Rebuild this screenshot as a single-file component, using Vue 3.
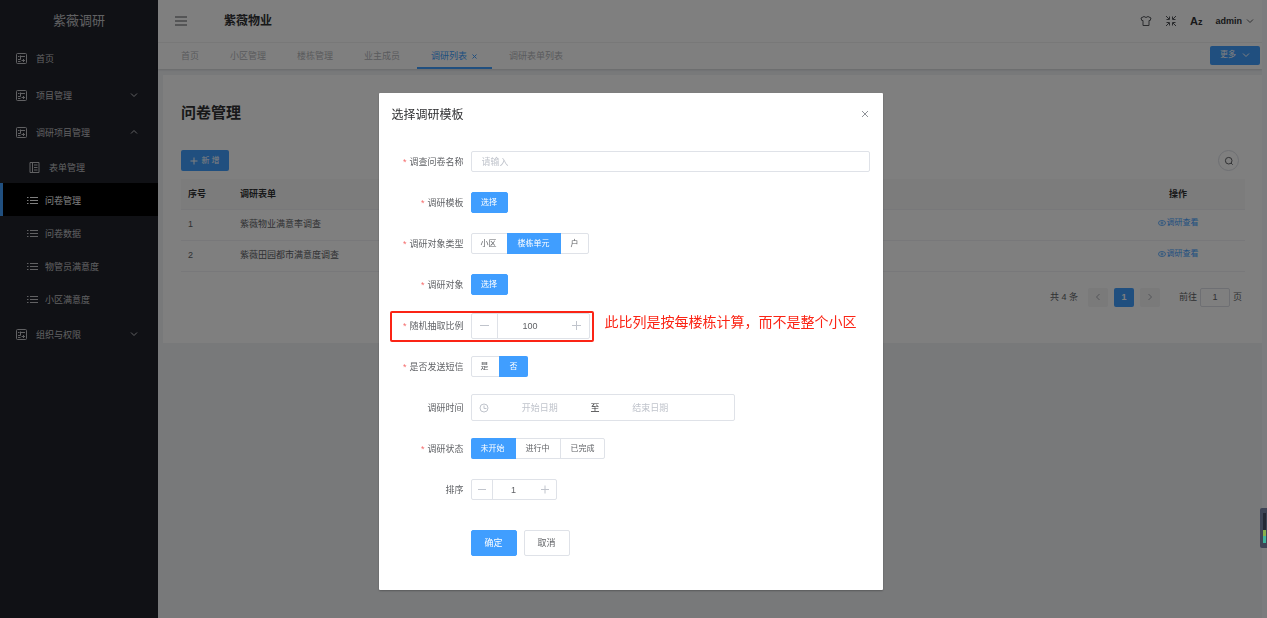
<script setup>
import { ref } from 'vue'

const menu = [
  { label: '首页', level: 1, icon: 'panel' },
  { label: '项目管理', level: 1, icon: 'panel', arrow: 'down' },
  { label: '调研项目管理', level: 1, icon: 'panel', arrow: 'up' },
  { label: '表单管理', level: 2, icon: 'book' },
  { label: '问卷管理', level: 2, icon: 'list', active: true },
  { label: '问卷数据', level: 2, icon: 'list' },
  { label: '物管员满意度', level: 2, icon: 'list' },
  { label: '小区满意度', level: 2, icon: 'list' },
  { label: '组织与权限', level: 1, icon: 'panel', arrow: 'down' }
]
const tabs = [
  { label: '首页' },
  { label: '小区管理' },
  { label: '楼栋管理' },
  { label: '业主成员' },
  { label: '调研列表', active: true },
  { label: '调研表单列表' }
]
const rows = [
  { id: 1, name: '紫薇物业满意率调查' },
  { id: 2, name: '紫薇田园都市满意度调查' }
]
const targets = ['小区', '楼栋单元', '户']
const yesNo = ['是', '否']
const states = ['未开始', '进行中', '已完成']

const name = ref('')
const target = ref('楼栋单元')
const ratio = ref(100)
const sms = ref('否')
const state = ref('未开始')
const order = ref(1)
const page = ref(1)
</script>

<template>
  <div class="app">
    <aside class="sidebar">
      <div class="logo">紫薇调研</div>
      <nav class="menu">
        <a
          v-for="item in menu"
          :key="item.label"
          href="#"
          class="menu-item"
          :class="['level-' + item.level, 'with-' + item.icon, { active: item.active }]"
        >
          <svg v-if="item.icon === 'panel'" class="menu-icon" viewBox="0 0 11 11">
            <rect x=".5" y=".5" width="10" height="10" rx="1" />
            <path d="M2 3.500h1.500M5 3.500h4M4.500 2.500v2.500M2 6.500h2.500V5M5.500 7.500h3.500M7.500 6v3M2 8.500h2.500" />
          </svg>
          <svg v-else-if="item.icon === 'book'" class="menu-icon" viewBox="0 0 11 11">
            <path d="M1 .5h9v10H1zM3.500 .5v10M5 3h3.500M5 5.500h3.500M5 8h3.500" />
          </svg>
          <svg v-else class="menu-icon" viewBox="0 0 11 11">
            <path d="M0 2.500h1.500M3 2.500h8M0 5.500h1.500M3 5.500h8M0 8.500h1.500M3 8.500h8" />
          </svg>
          <span class="menu-label">{{ item.label }}</span>
          <svg v-if="item.arrow" class="menu-arrow" :class="item.arrow" viewBox="0 0 8 8">
            <path d="M1 2.500l3 3 3-3" />
          </svg>
        </a>
      </nav>
    </aside>

    <div class="main">
      <header class="header">
        <button class="icon-btn burger" type="button" aria-label="菜单">
          <svg viewBox="0 0 14 12"><path d="M1 2h12M1 6h12M1 10h12" /></svg>
        </button>
        <strong class="site">紫薇物业</strong>
        <div class="tools">
          <button class="icon-btn" type="button" aria-label="主题">
            <svg viewBox="0 0 12 12">
              <path d="M4 1.500Q6 3.500 8 1.500L11 3 10.200 5.500H9V10.500H3V5.500H1.800L1 3Z" />
            </svg>
          </button>
          <button class="icon-btn" type="button" aria-label="全屏">
            <svg viewBox="0 0 12 12">
              <path d="M1 1l3 3M1.500 4.500h3v-3M11 1l-3 3M10.500 4.500h-3v-3M1 11l3-3M1.500 7.500h3v3M11 11l-3-3M10.500 7.500h-3v3" />
            </svg>
          </button>
          <button class="font-btn" type="button">A<small>z</small></button>
          <button class="user" type="button">
            admin
            <svg viewBox="0 0 8 8"><path d="M1 2.500l3 3 3-3" /></svg>
          </button>
        </div>
      </header>

      <div class="tabbar">
        <nav class="tabs">
          <a v-for="t in tabs" :key="t.label" href="#" class="tab" :class="{ active: t.active }">
            {{ t.label }}
            <svg v-if="t.active" viewBox="0 0 7 7"><path d="M1.500 1.500l4 4M5.500 1.500l-4 4" /></svg>
          </a>
        </nav>
        <button class="more" type="button">
          更多
          <svg viewBox="0 0 8 8"><path d="M1 2.500l3 3 3-3" /></svg>
        </button>
      </div>

      <main class="card">
        <h1>问卷管理</h1>
        <div class="toolbar">
          <button class="add" type="button">
            <svg viewBox="0 0 8 8"><path d="M4 .5v7M.5 4h7" /></svg>
            新 增
          </button>
          <button class="search" type="button" aria-label="搜索">
            <svg viewBox="0 0 10 10"><circle cx="4.700" cy="4.700" r="3.300" /><path d="M7 7l1.700 1.700" /></svg>
          </button>
        </div>
        <table class="table">
          <thead>
            <tr>
              <th class="col-no">序号</th>
              <th>调研表单</th>
              <th class="col-op">操作</th>
            </tr>
          </thead>
          <tbody>
            <tr v-for="r in rows" :key="r.id">
              <td>{{ r.id }}</td>
              <td>{{ r.name }}</td>
              <td class="col-op">
                <a href="#" class="view">
                  <svg viewBox="0 0 8 8">
                    <ellipse cx="4" cy="4" rx="3.500" ry="2.500" />
                    <circle cx="4" cy="4" r="1" />
                  </svg>
                  调研查看
                </a>
              </td>
            </tr>
          </tbody>
        </table>
        <div class="pager">
          <span class="total">共 4 条</span>
          <button type="button" class="page-btn" aria-label="上一页">
            <svg viewBox="0 0 8 8"><path d="M5.500 1l-3 3 3 3" /></svg>
          </button>
          <button type="button" class="page-btn current">1</button>
          <button type="button" class="page-btn" aria-label="下一页">
            <svg viewBox="0 0 8 8"><path d="M2.500 1l3 3-3 3" /></svg>
          </button>
          <label class="jump">前往 <input v-model="page" type="text" /> 页</label>
        </div>
      </main>
    </div>
    <div class="scroll-track"></div>

    <div class="overlay">
      <section class="dialog" role="dialog" aria-labelledby="dialog-title">
        <div class="dialog-head">
          <h2 id="dialog-title">选择调研模板</h2>
          <button class="close" type="button" aria-label="关闭">
            <svg viewBox="0 0 8 8"><path d="M1 1l6 6M7 1l-6 6" /></svg>
          </button>
        </div>
        <form class="form" @submit.prevent>
          <div class="row">
            <label class="label required" for="f-name">调查问卷名称</label>
            <input id="f-name" v-model="name" class="text" type="text" placeholder="请输入" />
          </div>
          <div class="row">
            <label class="label required" for="f-template">调研模板</label>
            <button id="f-template" class="btn small primary" type="button">选择</button>
          </div>
          <div class="row" role="radiogroup" aria-labelledby="l-target">
            <span id="l-target" class="label required">调研对象类型</span>
            <div class="segments">
              <label v-for="o in targets" :key="o" class="segment" :class="{ on: target === o }">
                <input v-model="target" type="radio" name="target" :value="o" />{{ o }}
              </label>
            </div>
          </div>
          <div class="row">
            <label class="label required" for="f-object">调研对象</label>
            <button id="f-object" class="btn small primary" type="button">选择</button>
          </div>
          <div class="row">
            <label class="label required" for="f-ratio">随机抽取比例</label>
            <div class="number large">
              <button type="button" aria-label="减少" @click="ratio--">
                <svg viewBox="0 0 10 10"><path d="M1 4.500h9" /></svg>
              </button>
              <input id="f-ratio" v-model="ratio" type="text" />
              <button type="button" aria-label="增加" @click="ratio++">
                <svg viewBox="0 0 10 10"><path d="M1 4.500h9M5.500 0v9" /></svg>
              </button>
            </div>
            <div class="mark"></div>
            <p class="note">此比列是按每楼栋计算，而不是整个小区</p>
          </div>
          <div class="row" role="radiogroup" aria-labelledby="l-sms">
            <span id="l-sms" class="label required">是否发送短信</span>
            <div class="segments">
              <label v-for="o in yesNo" :key="o" class="segment" :class="{ on: sms === o }">
                <input v-model="sms" type="radio" name="sms" :value="o" />{{ o }}
              </label>
            </div>
          </div>
          <div class="row">
            <label class="label" for="f-start">调研时间</label>
            <div class="range">
              <svg viewBox="0 0 10 10"><circle cx="5" cy="5" r="4" /><path d="M5 2.500V5.500h2.500" /></svg>
              <input id="f-start" type="text" placeholder="开始日期" />
              <span>至</span>
              <input type="text" placeholder="结束日期" aria-label="结束日期" />
            </div>
          </div>
          <div class="row" role="radiogroup" aria-labelledby="l-state">
            <span id="l-state" class="label required">调研状态</span>
            <div class="segments">
              <label v-for="o in states" :key="o" class="segment" :class="{ on: state === o }">
                <input v-model="state" type="radio" name="state" :value="o" />{{ o }}
              </label>
            </div>
          </div>
          <div class="row">
            <label class="label" for="f-order">排序</label>
            <div class="number">
              <button type="button" aria-label="减少" @click="order--">
                <svg viewBox="0 0 10 10"><path d="M1 4.500h8" /></svg>
              </button>
              <input id="f-order" v-model="order" type="text" />
              <button type="button" aria-label="增加" @click="order++">
                <svg viewBox="0 0 10 10"><path d="M1 4.500h8M5 .5v8" /></svg>
              </button>
            </div>
          </div>
          <div class="actions">
            <button class="btn primary" type="submit">确定</button>
            <button class="btn" type="button">取消</button>
          </div>
        </form>
      </section>
    </div>

    <div class="meter">
      <svg viewBox="0 0 7 40">
        <path class="off" d="M4.500 5v17" />
        <path class="green" d="M4.500 22v6" />
        <path class="teal" d="M4.500 28v7" />
      </svg>
    </div>
  </div>
</template>

<style>
body {
  margin: 0;
  background: #f0f2f5;
}
</style>

<style scoped>
.app {
  display: flex;
  min-height: 100vh;
  font-family: "Liberation Sans", "Noto Sans CJK SC", sans-serif;
  font-size: 9px;
  line-height: 14px;
  color: #606266;
}
.app *,
.app *::before {
  box-sizing: border-box;
}
button,
input {
  font: inherit;
  color: inherit;
  margin: 0;
  padding: 0;
  border: 0;
  background: none;
}
input {
  min-width: 0;
  outline: 0;
}
a {
  color: inherit;
  text-decoration: none;
}
svg {
  display: block;
  flex: none;
  fill: none;
  stroke: currentColor;
}

/* sidebar */
.sidebar {
  flex: none;
  width: 158px;
  background: #20222a;
  color: #c2c3c6;
}
.logo {
  height: 39px;
  padding-top: 3px;
  line-height: 36px;
  text-align: center;
  font-size: 13px;
}
.menu-item {
  display: flex;
  align-items: center;
  height: 37px;
  padding: 2px 20px 0 16px;
}
.menu-icon {
  width: 11px;
  height: 11px;
  margin-right: 9px;
}
.menu-label {
  flex: 1;
}
.menu-arrow {
  width: 8px;
  height: 8px;
  margin-bottom: 2px;
}
.menu-arrow.up {
  transform: rotate(180deg);
}
.level-2 {
  height: 33px;
  padding-left: 27px;
}
.level-2 .menu-icon {
  margin-right: 7px;
}
.level-2.with-book {
  padding-left: 29px;
}
.with-book .menu-icon {
  margin-right: 9px;
}
.menu-item.active {
  background: #000;
  color: #fff;
  border-left: 3px solid #409eff;
  padding-left: 24px;
}

/* header */
.main {
  flex: 1;
  min-width: 0;
}
.header {
  display: flex;
  align-items: center;
  height: 43px;
  padding: 0 8px 0 16px;
  background: #fff;
  border-bottom: 1px solid #f2f2f2;
  color: #303133;
}
.icon-btn {
  color: #55575b;
}
.icon-btn svg {
  width: 12px;
  height: 12px;
}
.burger svg {
  width: 14px;
  height: 12px;
}
.site {
  margin-left: 36px;
  font-size: 12px;
}
.tools {
  display: flex;
  align-items: center;
  gap: 13px;
  margin-left: auto;
}
.font-btn {
  font-size: 11px;
  font-weight: bold;
}
.font-btn small {
  font-size: 9px;
}
.user {
  display: flex;
  align-items: center;
  gap: 4px;
  font-weight: bold;
}
.user svg {
  width: 8px;
  height: 8px;
  color: #606266;
}
.more svg {
  width: 8px;
  height: 8px;
}
.tabbar {
  display: flex;
  align-items: center;
  justify-content: space-between;
  height: 26px;
  padding: 0 2px 0 9px;
  background: #fff;
  box-shadow: 0 1px 2px #0002;
}
.tabs {
  display: flex;
  align-self: stretch;
  gap: 3px;
}
.tab {
  display: flex;
  align-items: center;
  gap: 4px;
  padding: 2px 14px 0;
  border-bottom: 2px solid transparent;
  color: #b4b6ba;
}
.tab svg {
  width: 7px;
  height: 7px;
}
.tab.active {
  color: #409eff;
  border-color: #409eff;
}
.more {
  display: flex;
  align-items: center;
  justify-content: center;
  gap: 6px;
  width: 50px;
  height: 19px;
  margin-bottom: 2px;
  border-radius: 2px;
  background: #409eff;
  color: #fff;
  font-size: 8px;
}

/* content */
.card {
  margin: 6px 0 0 5px;
  padding: 28px 17px 36px 18px;
  min-height: 268px;
  background: #fff;
}
h1 {
  margin: 0;
  font-size: 15px;
  line-height: 20px;
  color: #303133;
}
.toolbar {
  display: flex;
  align-items: center;
  justify-content: space-between;
  margin: 27px 0 8px;
  padding-right: 6px;
}
.add {
  display: flex;
  align-items: center;
  justify-content: center;
  gap: 3px;
  width: 48px;
  height: 21px;
  border-radius: 2px;
  background: #409eff;
  color: #fff;
  font-size: 8px;
}
.add svg {
  width: 8px;
  height: 8px;
}
.search {
  display: flex;
  align-items: center;
  justify-content: center;
  width: 21px;
  height: 21px;
  border: 1px solid #dcdfe6;
  border-radius: 50%;
}
.search svg {
  width: 10px;
  height: 10px;
}
.table {
  width: 100%;
  border-collapse: collapse;
  table-layout: fixed;
}
.table th,
.table td {
  height: 30px;
  padding: 0 7px;
  border-bottom: 1px solid #f0f1f5;
  text-align: left;
}
.table td {
  height: 31px;
  padding-bottom: 2px;
}
.table th {
  background: #f8f8f9;
  color: #303133;
}
.table .col-no {
  width: 52px;
}
.table .col-op {
  width: 134px;
  text-align: center;
}
.view {
  display: inline-flex;
  align-items: center;
  gap: 1px;
  font-size: 8px;
  color: #409eff;
}
.view svg {
  width: 8px;
  height: 8px;
  stroke-width: 0.8;
}
.pager {
  display: flex;
  align-items: center;
  justify-content: flex-end;
  gap: 6px;
  margin-top: 16px;
  padding-right: 3px;
}
.total {
  margin-right: 4px;
}
.page-btn {
  display: flex;
  align-items: center;
  justify-content: center;
  width: 20px;
  height: 19px;
  border-radius: 2px;
  background: #f4f4f5;
  color: #a8abb2;
}
.page-btn svg {
  width: 8px;
  height: 8px;
}
.page-btn.current {
  background: #409eff;
  color: #fff;
  font-weight: bold;
}
.jump {
  display: flex;
  align-items: center;
  gap: 3px;
  margin-left: 13px;
}
.jump input {
  width: 30px;
  height: 19px;
  border: 1px solid #dcdfe6;
  border-radius: 2px;
  text-align: center;
}
.scroll-track {
  flex: none;
  width: 5px;
  background: #f8f9fc;
}

/* dialog */
.overlay {
  position: fixed;
  inset: 0;
  display: flex;
  align-items: flex-start;
  justify-content: center;
  padding: 93px 5px 0 0;
  background: rgba(0, 0, 0, 0.5);
}
.dialog {
  width: 40%;
  padding: 13px 13px 34px;
  border-radius: 1px;
  background: #fff;
  box-shadow: 0 1px 2px #0004;
}
.dialog-head {
  display: flex;
  align-items: center;
  justify-content: space-between;
  padding-right: 1px;
}
h2 {
  margin: 0;
  font-size: 12px;
  font-weight: normal;
  line-height: 18px;
  color: #303133;
}
.close {
  margin-bottom: 2px;
  color: #909399;
}
.close svg {
  width: 8px;
  height: 8px;
}
.form {
  margin-top: 24px;
}
.row {
  position: relative;
  display: flex;
  align-items: center;
  height: 27px;
  margin-bottom: 14px;
}
.label {
  flex: none;
  width: 72px;
  margin-right: 7px;
  text-align: right;
}
.required::before {
  content: "*";
  margin-right: 3px;
  color: #f56c6c;
}
.text {
  flex: 1;
  height: 21px;
  padding: 0 10px;
  border: 1px solid #dfe2e8;
  border-radius: 2px;
}
input::placeholder {
  color: #c0c4cc;
  opacity: 1;
}
.btn {
  width: 46px;
  height: 26px;
  border: 1px solid #dfe2e8;
  border-radius: 2px;
}
.btn.small {
  width: 37px;
  height: 21px;
  font-size: 8px;
}
.btn.primary {
  border-color: #409eff;
  background: #409eff;
  color: #fff;
}
.segments {
  display: flex;
  height: 21px;
  border: 1px solid #dfe2e8;
  border-radius: 2px;
  font-size: 8px;
}
.segment {
  display: flex;
  align-items: center;
  padding: 0 10px;
  margin: -1px 0;
}
.segment + .segment {
  border-left: 1px solid #dfe2e8;
}
.segment:first-child {
  margin-left: -1px;
}
.segment:last-child {
  margin-right: -1px;
}
.segment input {
  position: absolute;
  opacity: 0;
  pointer-events: none;
}
.segment.on,
.segment.on + .segment {
  border-color: #409eff;
}
.segment.on {
  background: #409eff;
  color: #fff;
}
.segment.on:first-child {
  border-radius: 2px 0 0 2px;
}
.segment.on:last-child {
  border-radius: 0 2px 2px 0;
}
.number {
  display: flex;
  width: 86px;
  height: 21px;
  border: 1px solid #dfe2e8;
  border-radius: 2px;
}
.number button {
  display: flex;
  align-items: center;
  justify-content: center;
  flex: none;
  width: 21px;
  color: #c0c4cc;
}
.number button:first-child {
  border-right: 1px solid #dfe2e8;
}
.number svg {
  width: 10px;
  height: 10px;
}
.number input {
  flex: 1;
  text-align: center;
}
.number.large {
  width: 119px;
  height: 26px;
}
.number.large button {
  width: 26px;
}
.mark {
  position: absolute;
  left: -2px;
  top: -1px;
  width: 204px;
  height: 31px;
  border: 2px solid #fb2415;
  border-radius: 2px;
  pointer-events: none;
}
.note {
  position: absolute;
  left: 213px;
  top: 0;
  margin: 0;
  font-size: 14px;
  line-height: 20px;
  color: #fb2415;
  white-space: nowrap;
}
.range {
  display: flex;
  align-items: center;
  width: 264px;
  height: 27px;
  padding: 0 34px 0 7px;
  border: 1px solid #dfe2e8;
  border-radius: 2px;
}
.range svg {
  width: 10px;
  height: 10px;
  margin-right: 2px;
  color: #c0c4cc;
}
.range input {
  flex: 1;
  text-align: center;
}
.range span {
  width: 12px;
  text-align: center;
  color: #303133;
}
.actions {
  display: flex;
  gap: 7px;
  margin-top: 27px;
  padding-left: 79px;
}

/* level meter on the window edge */
.meter {
  position: fixed;
  right: 0;
  top: 508px;
  width: 7px;
  height: 40px;
  border-radius: 2px 0 0 2px;
  background: #3f4556;
}
.meter svg {
  width: 7px;
  height: 40px;
  stroke-width: 3;
}
.off {
  stroke: #262a36;
}
.green {
  stroke: #86b04c;
}
.teal {
  stroke: #3fb39a;
}
</style>
